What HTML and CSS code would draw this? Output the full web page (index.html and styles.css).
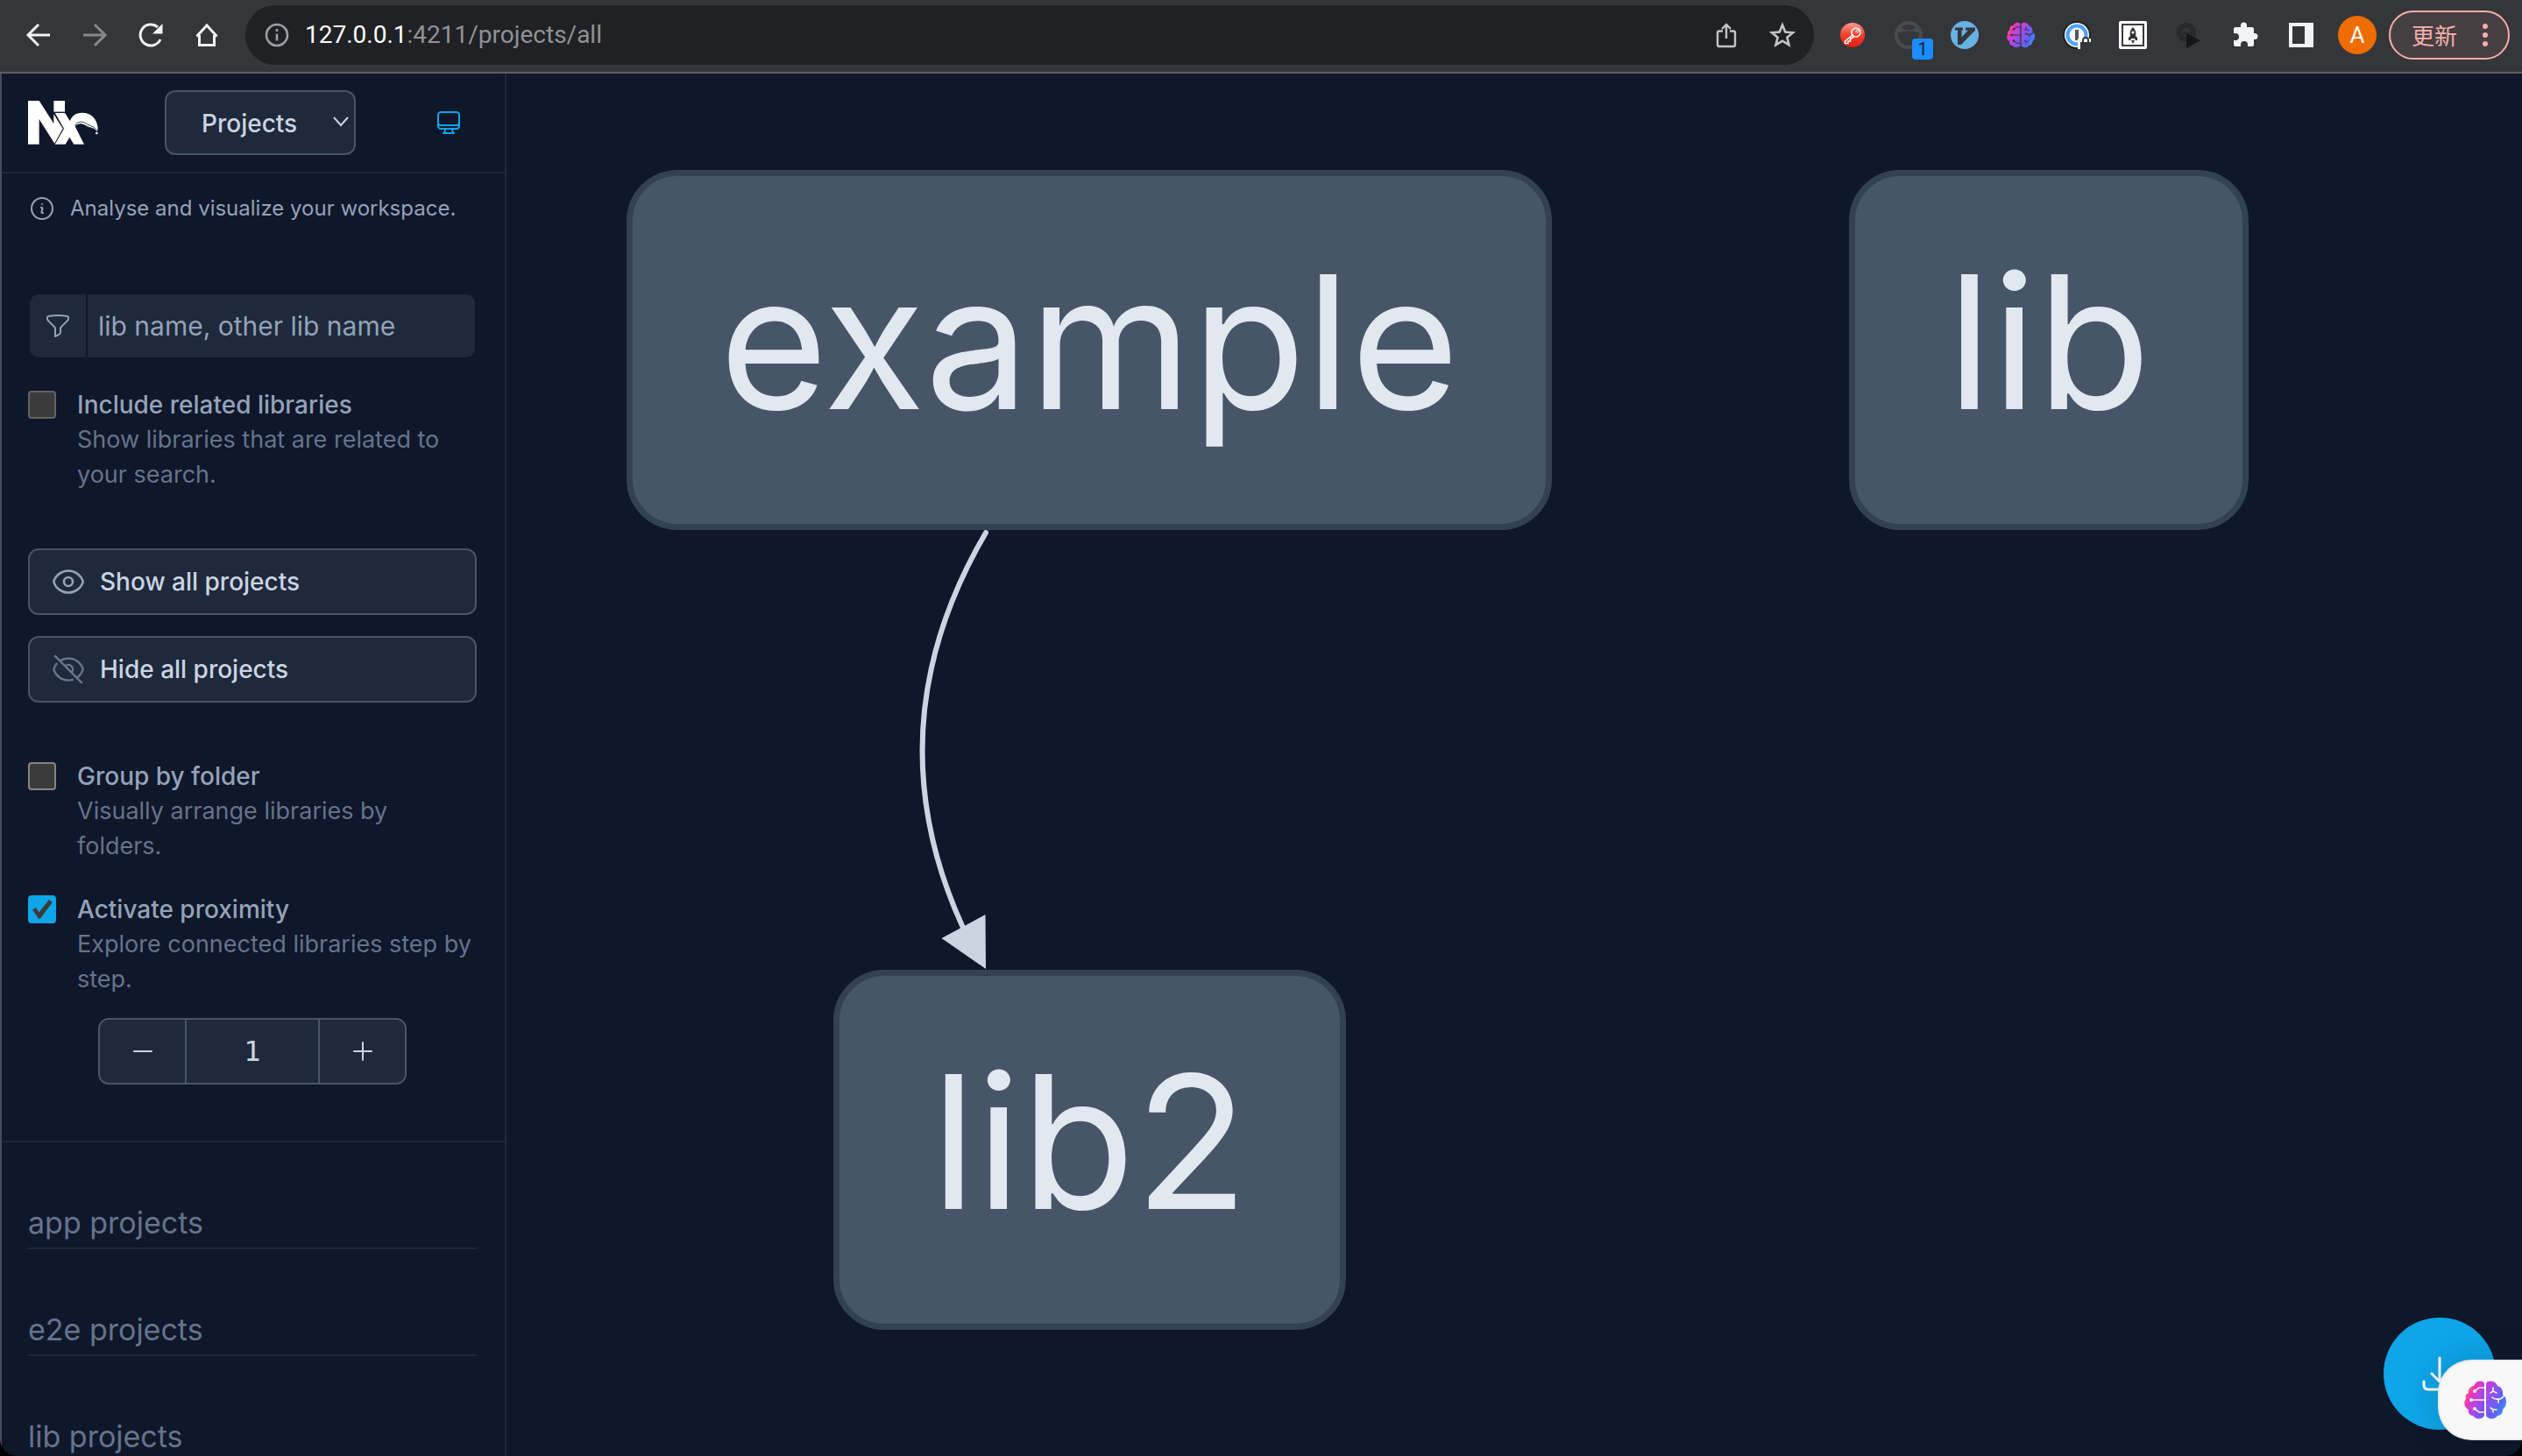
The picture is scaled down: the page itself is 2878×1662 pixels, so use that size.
FILE: index.html
```html
<!DOCTYPE html>
<html lang="en">
<head>
<meta charset="utf-8">
<title>Nx project graph</title>
<link rel="stylesheet" href="styles.css">
</head>
<body>
<svg class="defs" aria-hidden="true">
  <defs>
    <linearGradient id="brain-left" x1="0" y1="0" x2="1" y2="1">
      <stop offset="0" stop-color="#f7a52b"/><stop offset=".16" stop-color="#f58a3c"/><stop offset=".32" stop-color="#ee35b8"/><stop offset=".6" stop-color="#b445e6"/><stop offset="1" stop-color="#5b5bf5"/>
    </linearGradient>
    <linearGradient id="brain-right" x1="0" y1="0" x2="1" y2="1">
      <stop offset="0" stop-color="#d83bd6"/><stop offset=".35" stop-color="#8f52ee"/><stop offset=".65" stop-color="#5566f7"/><stop offset="1" stop-color="#35b6ff"/>
    </linearGradient>
    <linearGradient id="key-red" x1="0" y1="0" x2="0" y2="1">
      <stop offset="0" stop-color="#ff9a8c"/><stop offset=".5" stop-color="#f4422f"/><stop offset="1" stop-color="#e01c10"/>
    </linearGradient>
    <symbol id="brain" viewBox="0 0 48 44">
      <path fill="url(#brain-left)" d="M23 3v37c-2 4-10 5-13 0-4 0-6-4-5-7-5-2-6-9-3-12-1-4 0-6 3-7-1-4 2-8 6-8 2-6 10-7 12-3z"/>
      <path fill="url(#brain-right)" d="M25 3v37c2 4 10 5 13 0 4 0 6-3 6-7 4-3 5-9 3-14l-3-3c1-5-2-9-6-10-2-6-10-7-13-3z"/>
      <g fill="none" stroke="currentColor" stroke-width="1.6" stroke-linecap="round">
        <path d="M23 8h-6l-5 4M23 22H8M23 36h-6l-5-4M30 14l3-2v-4m0 4 4 2M32 19c3 3 10 3 13-1M39 21v4M30 31l3 2h4m-4 0v3"/>
      </g>
      <g fill="currentColor"><circle cx="12" cy="12" r="2"/><circle cx="8" cy="22" r="2"/><circle cx="12" cy="32" r="2"/></g>
    </symbol>
  </defs>
</svg>

<div class="window">
<header class="toolbar">
  <nav class="nav-buttons" aria-label="Navigation">
    <button class="icon-button" aria-label="Back"><svg class="i32" viewBox="0 0 32 32" fill="none" stroke="#f1f3f4" stroke-width="3"><path d="M29 16H5M16 4 4 16l12 12"/></svg></button>
    <button class="icon-button" aria-label="Forward"><svg class="i32" viewBox="0 0 32 32" fill="none" stroke="#87888b" stroke-width="3"><path d="M3 16h24M16 4l12 12-12 12"/></svg></button>
    <button class="icon-button" aria-label="Reload"><svg class="i32" viewBox="0 0 32 32" fill="none" stroke="#f1f3f4" stroke-width="3"><path d="M27 21A12 12 0 1 1 24 7"/><path d="M29.5 3v11.5H18z" fill="#f1f3f4" stroke="none"/></svg></button>
    <button class="icon-button" aria-label="Home"><svg class="i32" viewBox="0 0 32 32" fill="none" stroke="#f1f3f4" stroke-width="3"><path d="M7.5 16v11.5h17V16M4.500 17.500 16 5l11.500 12.500"/></svg></button>
  </nav>
  <div class="address">
    <svg class="i32" viewBox="0 0 32 32" fill="none" stroke="#9aa0a6" stroke-width="2.6"><circle cx="16" cy="16" r="12"/><path d="M16 14.5v8M16 9v3"/></svg>
    <div class="url"><span class="host">127.0.0.1</span>:4211/projects/all</div>
    <button class="icon-button" aria-label="Share"><svg class="i32" viewBox="0 0 32 32" fill="none" stroke="#c4c5c7" stroke-width="2.4"><path d="M12 11.500H8A2 2 0 0 0 6 13.500V27a2 2 0 0 0 2 2h16a2 2 0 0 0 2-2V13.500a2 2 0 0 0-2-2h-4M16 20V4M11 9l5-5 5 5"/></svg></button>
    <button class="icon-button" aria-label="Bookmark"><svg class="i32" viewBox="0 0 32 32" fill="none" stroke="#c4c5c7" stroke-width="2.6"><path d="m16 4.500 3.300 8 8.700.7-6.600 5.600 2.100 8.400L16 22.700l-7.500 4.500 2.100-8.400L4 13.200l8.700-.7z"/></svg></button>
  </div>
  <div class="extensions">
    <button class="icon-button" aria-label="Key"><svg class="i32" viewBox="0 0 32 32"><circle cx="16" cy="16" r="14" fill="url(#key-red)"/><path d="m16 16-8.500 7v2.500h3.500v-2.500h2.500v-2.500l4-2.500" fill="none" stroke="#fff" stroke-width="1.5"/><circle cx="20" cy="13" r="5" fill="none" stroke="#fff" stroke-width="1.5"/><circle cx="21.500" cy="11.500" r="1.500" fill="none" stroke="#fff"/></svg></button>
    <button class="icon-button" aria-label="Tampermonkey"><svg class="i32" viewBox="0 0 32 32"><circle cx="16" cy="16" r="14" fill="none" stroke="#4a4b4c" stroke-width="4"/><path d="M4 8h5l3 2h8l3-2h5v5h-4c-2-2-14-2-16 0H4z" fill="#4a4b4c"/></svg><span class="badge">1</span></button>
    <button class="icon-button" aria-label="Vimium"><svg class="i32" viewBox="0 0 32 32"><circle cx="16" cy="16" r="16" fill="#68b1e5"/><path d="M5 7.500h9v3h-1.500v8L20 10.500h-3v-3h11v3L12 27H8V10.500H5z" fill="#35363a"/></svg></button>
    <button class="icon-button dark-brain" aria-label="Brain"><svg class="i32"><use href="#brain"/></svg></button>
    <button class="icon-button" aria-label="Password manager"><svg class="i32" viewBox="0 0 32 32"><circle cx="16" cy="16" r="16" fill="#202124"/><circle cx="16" cy="16" r="14" fill="#f5f6f7"/><circle cx="16" cy="16" r="10.500" fill="none" stroke="#4aa3ff" stroke-width="4"/><path d="M14 10h4v12h-4z" fill="#55565a"/><path d="M17 20h15v12H17z" fill="#f5f6f7"/><path d="M20 24h12v8H20z" fill="#35363a"/><path d="M23 25v-3a3 3 0 0 1 6 0v3" fill="none" stroke="#35363a" stroke-width="2"/></svg></button>
    <button class="icon-button" aria-label="Rocket"><svg class="i32" viewBox="0 0 32 32"><rect width="32" height="32" rx="2" fill="#fff"/><rect x="4" y="4" width="24" height="24" fill="none" stroke="#3b3b3b" stroke-width="2"/><path d="M16 7c3 3 4 6 3 10l2 2v3h-2l-1-2h-4l-1 2h-2v-3l2-2c-1-4 0-7 3-10zM14 22h4l-2 4z" fill="#333"/><circle cx="16" cy="13" r="1.500" fill="#fff"/></svg></button>
    <button class="icon-button" aria-label="Player"><svg class="i32" viewBox="0 0 32 32"><circle cx="13" cy="13" r="8" fill="none" stroke="#28292c" stroke-width="6"/><path d="M9 14h9" stroke="#28292c" stroke-width="3"/><path d="M13 14v17l16-8.500z" fill="#151618"/></svg></button>
    <button class="icon-button" aria-label="Extensions"><svg class="i32" viewBox="0 0 32 32"><path fill="#f1f3f4" d="M3 9a2 2 0 0 1 2-2h6V5a3.500 3.500 0 0 1 7 0v2h6a2 2 0 0 1 2 2v5h1a3.500 3.500 0 0 1 0 7h-1v6a2 2 0 0 1-2 2h-5v-2a4 4 0 0 0-8 0v2H5a2 2 0 0 1-2-2v-5h2a4 4 0 0 0 0-8H3z"/></svg></button>
    <button class="icon-button" aria-label="Side panel"><svg class="i32" viewBox="0 0 32 32"><path fill="#f1f3f4" fill-rule="evenodd" d="M2 2h28v28H2zM6 6v20h14V6z"/></svg></button>
    <button class="avatar" aria-label="Profile">A</button>
    <button class="update"><span>更新</span><svg viewBox="0 0 6 28" fill="#f6aea9"><circle cx="3" cy="4" r="3"/><circle cx="3" cy="14" r="3"/><circle cx="3" cy="24" r="3"/></svg></button>
  </div>
</header>

<div class="app">
  <aside class="sidebar">
    <div class="brand-row">
      <svg class="logo" viewBox="36 45 240 150" aria-label="Nx">
        <path fill="#fff" d="M36 45h38l50 78V45h38v38h-38v8l30 49-27 52-53-84v86H36z"/>
        <path fill="#fff" d="M128 86h34l17 28c7-16 18-28 42-28 32 0 52 22 54 52l-2 12c-12-14-24-10-34-16-18-12-32-12-42-1l31 61h-35l-15-24-14 24h-37l28-54z"/>
        <path fill="none" stroke="#0f172a" stroke-width="3" d="M124 85h38M127 88l31 52-31 54"/>
        <path fill="none" stroke="#0f172a" stroke-width="2.5" d="M197 130c6-14 24-16 36-8 12 9 22 7 38 22M200 132c10-10 22-8 34-1 12 6 18 6 30 12"/>
        <circle cx="271" cy="156" r="4" fill="#fff"/>
      </svg>
      <div class="select-wrap">
        <select class="select" aria-label="View"><option>Projects</option></select>
        <svg class="chevron" viewBox="0 0 20 12" fill="none" stroke="#cbd5e1" stroke-width="2"><path d="m2 1 8 9 8-9"/></svg>
      </div>
      <button class="icon-button theme" aria-label="Theme"><svg class="i32 line" viewBox="0 0 24 24"><path d="M9 17.250v1.007a3 3 0 01-.879 2.122L7.500 21h9l-.621-.621A3 3 0 0115 18.257V17.250m6-12V15a2.250 2.250 0 01-2.250 2.250H5.250A2.250 2.250 0 013 15V5.250m18 0A2.250 2.250 0 0018.750 3H5.250A2.250 2.250 0 003 5.250m18 0V12a2.250 2.250 0 01-2.250 2.250H5.250A2.250 2.250 0 013 12V5.250"/></svg></button>
    </div>

    <p class="hint"><svg class="i32 line" viewBox="0 0 24 24"><path d="M11.250 11.250l.041-.02a.75.75 0 011.063.852l-.708 2.836a.75.75 0 001.063.853l.041-.021M21 12a9 9 0 11-18 0 9 9 0 0118 0zm-9-3.750h.008v.008H12V8.250z"/></svg>Analyse and visualize your workspace.</p>

    <div class="controls">
      <label class="search">
        <span class="search-icon"><svg class="i32 line" viewBox="0 0 24 24"><path d="M12 3c2.755 0 5.455.232 8.083.678.533.09.917.556.917 1.096v1.044a2.250 2.250 0 01-.659 1.591l-5.432 5.432a2.250 2.250 0 00-.659 1.591v2.927a2.250 2.250 0 01-1.244 2.013L9.750 21v-6.568a2.250 2.250 0 00-.659-1.591L3.659 7.409A2.250 2.250 0 013 5.818V4.774c0-.54.384-1.006.917-1.096A48.320 48.320 0 0112 3z"/></svg></span>
        <input class="search-input" type="text" placeholder="lib name, other lib name" aria-label="Filter by library name">
      </label>
      <div class="option">
        <input class="check dim" type="checkbox" id="related">
        <div><label for="related">Include related libraries</label><p>Show libraries that are related to your search.</p></div>
      </div>

      <div class="actions">
        <button class="action"><svg class="i40 line" viewBox="0 0 24 24"><path d="M2.036 12.322a1.012 1.012 0 010-.639C3.423 7.510 7.360 4.500 12 4.500c4.638 0 8.573 3.007 9.963 7.178.07.207.07.431 0 .639C20.577 16.490 16.640 19.500 12 19.500c-4.638 0-8.573-3.007-9.963-7.178z"/><path d="M15 12a3 3 0 11-6 0 3 3 0 016 0z"/></svg>Show all projects</button>
        <button class="action muted"><svg class="i40 line" viewBox="0 0 24 24"><path d="M3.980 8.223A10.477 10.477 0 001.934 12C3.226 16.338 7.244 19.500 12 19.500c.993 0 1.953-.138 2.863-.395M6.228 6.228A10.450 10.450 0 0112 4.500c4.756 0 8.773 3.162 10.065 7.498a10.523 10.523 0 01-4.293 5.774M6.228 6.228L3 3m3.228 3.228l3.650 3.650m7.894 7.894L21 21m-3.228-3.228l-3.650-3.650m0 0a3 3 0 10-4.243-4.243m4.242 4.242L9.880 9.880"/></svg>Hide all projects</button>
      </div>

      <div class="option">
        <input class="check" type="checkbox" id="group">
        <div><label for="group">Group by folder</label><p>Visually arrange libraries by folders.</p></div>
      </div>
      <div class="option">
        <input class="check" type="checkbox" id="proximity" checked>
        <div><label for="proximity">Activate proximity</label><p>Explore connected libraries step by step.</p></div>
      </div>
      <div class="stepper">
        <button aria-label="Decrease"><svg class="i32 line" viewBox="0 0 24 24"><path d="M19.500 12h-15"/></svg></button>
        <input type="text" value="1" aria-label="Proximity depth" readonly>
        <button aria-label="Increase"><svg class="i32 line" viewBox="0 0 24 24"><path d="M12 4.500v15m7.500-7.500h-15"/></svg></button>
      </div>
    </div>

    <div class="lists">
      <h2>app projects</h2>
      <h2>e2e projects</h2>
      <h2>lib projects</h2>
    </div>
  </aside>

  <main class="graph">
    <svg class="edge" viewBox="0 0 80 504" aria-hidden="true">
      <path d="M77 4Q-53.500 227 51 455" fill="none" stroke="#cbd5e1" stroke-width="6" stroke-linecap="round"/>
      <path d="M77 502 26.500 467 76.500 440z" fill="#cbd5e1"/>
    </svg>
    <div class="node node-example">example</div>
    <div class="node node-lib">lib</div>
    <div class="node node-lib2">lib2</div>
    <button class="download" aria-label="Download"><svg class="line" viewBox="0 0 24 24"><path d="M3 16.500v2.250A2.250 2.250 0 005.250 21h13.500A2.250 2.250 0 0021 18.750V16.500M16.500 12L12 16.500m0 0L7.500 12m4.500 4.500V3"/></svg></button>
    <button class="assistant" aria-label="Assistant"><svg><use href="#brain"/></svg></button>
  </main>
</div>
</div>
</body>
</html>
```
FILE: styles.css
```css
* { box-sizing: border-box; }
body {
  margin: 0;
  background: #000;
  color: #94a3b8;
  font-family: Inter, "Noto Sans CJK SC", sans-serif;
  font-size: 28px;
  line-height: 40px;
}
p, h2 { margin: 0; }
button, input, select { font: inherit; color: inherit; margin: 0; }
button { padding: 0; border: 0; background: none; }
svg { display: block; flex: none; }
.defs { position: absolute; width: 0; height: 0; }
.i32 { width: 32px; height: 32px; }
.i40 { width: 40px; height: 40px; }
.line {
  fill: none;
  stroke: currentColor;
  stroke-width: 1.5;
  stroke-linecap: round;
  stroke-linejoin: round;
}
.window {
  display: flex;
  flex-direction: column;
  height: 100vh;
  overflow: hidden;
  border-radius: 0 0 20px 20px;
  background: #0f172a;
}

/* Browser toolbar */
.toolbar {
  display: flex;
  align-items: center;
  flex: none;
  height: 84px;
  padding: 0 14px 2px 28px;
  background: #35363a;
  border-bottom: 2px solid #5d5e62;
}
.icon-button { position: relative; display: block; flex: none; }
.nav-buttons { display: flex; gap: 32px; }
.address {
  display: flex;
  align-items: center;
  flex: 1;
  height: 68px;
  margin-left: 28px;
  padding: 0 20px;
  gap: 32px;
  border-radius: 34px;
  background: #202124;
}
.url {
  flex: 1;
  margin-left: -16px;
  font-family: Roboto, sans-serif;
  color: #909296;
}
.host { color: #fff; }
.extensions { display: flex; align-items: center; gap: 32px; margin-left: 28px; }
.dark-brain { color: #35363a; }
.badge {
  position: absolute;
  left: 20px;
  top: 20px;
  width: 24px;
  height: 24px;
  border-radius: 4px;
  background: #1a8cff;
  color: #202124;
  font: 20px/24px Roboto, sans-serif;
}
.avatar {
  width: 44px;
  height: 44px;
  margin: 0 -16px 0 -6px;
  border-radius: 50%;
  background: #ef6c00;
  color: #fff;
  font: 26px/44px Roboto, sans-serif;
}
.update {
  display: flex;
  align-items: center;
  justify-content: space-between;
  width: 138px;
  height: 56px;
  margin-left: -2px;
  padding: 0 23px 0 24px;
  border: 2px solid #f6aea9;
  border-radius: 28px;
  background: #453f42;
  color: #f6aea9;
  font: 26px/40px "Noto Sans CJK SC", sans-serif;
}
.update svg { width: 6px; height: 28px; }

/* Sidebar */
.app { display: flex; flex: 1; min-height: 0; }
.sidebar {
  flex: none;
  width: 578px;
  overflow: hidden;
  border-left: 2px solid #454b5a;
  border-right: 2px solid #1e293b;
}
.brand-row {
  display: flex;
  align-items: center;
  gap: 76px;
  height: 114px;
  padding: 0 48px 0 30px;
  border-bottom: 2px solid #1e293b;
}
.logo { width: 80px; height: 50px; }
.select-wrap { position: relative; }
.select {
  appearance: none;
  display: block;
  width: 218px;
  height: 74px;
  padding: 2px 40px 0;
  border: 2px solid #475569;
  border-radius: 12px;
  background: #1e293b;
  color: #cbd5e1;
  font-weight: 500;
}
.chevron {
  position: absolute;
  right: 7px;
  top: 30px;
  width: 20px;
  height: 12px;
}
.theme { margin-left: auto; color: #0ea5e9; }
.hint {
  display: flex;
  align-items: center;
  gap: 16px;
  padding: 20px 30px 0;
  font-size: 24px;
}
.controls {
  display: flex;
  flex-direction: column;
  gap: 32px;
  padding: 78px 30px 64px;
  border-bottom: 2px solid #1e293b;
}
.controls, .lists { padding-right: 32px; }
.search {
  display: flex;
  gap: 2px;
  height: 72px;
  margin: 0 2px 2px;
}
.search-icon {
  display: flex;
  align-items: center;
  justify-content: center;
  width: 64px;
  border-radius: 10px 0 0 10px;
  background: #1e293b;
}
.search-input {
  flex: 1;
  min-width: 0;
  padding: 0 12px;
  border: 0;
  border-radius: 0 10px 10px 0;
  background: #1e293b;
  font-size: 30px;
}
.search-input::placeholder { color: #94a3b8; opacity: 1; }
.option { display: flex; gap: 24px; color: #64748b; }
.option > div { flex: 1; }
.option label { display: block; color: #94a3b8; font-weight: 500; }
.option p { font-size: 27px; }
.check {
  appearance: none;
  flex: none;
  width: 32px;
  height: 32px;
  margin-top: 4px;
  border: 2px solid #858585;
  border-radius: 4px;
  background: #3b3b3b;
}
.check.dim { border-color: #626262; }
.check:checked { border-color: #0ea5e9; background: #0ea5e9; }
.check:checked::before {
  content: "";
  display: block;
  width: 28px;
  height: 28px;
  background: #3b3b3b;
  clip-path: polygon(11% 52%, 24% 43%, 38% 62%, 78% 11%, 92% 21%, 42% 88%, 36% 88%);
}
.actions { display: flex; flex-direction: column; gap: 24px; margin: 32px 0; }
.action {
  display: flex;
  align-items: center;
  gap: 16px;
  height: 76px;
  padding: 0 24px;
  border: 2px solid #475569;
  border-radius: 12px;
  background: #1e293b;
  color: #cbd5e1;
  font-weight: 500;
}
.action svg { color: #94a3b8; }
.action.muted svg { color: #64748b; }
.stepper {
  display: flex;
  width: 352px;
  height: 76px;
  margin: -8px auto 0;
  border: 2px solid #475569;
  border-radius: 12px;
  overflow: hidden;
  background: #1e293b;
  color: #cbd5e1;
}
.stepper button {
  display: flex;
  align-items: center;
  justify-content: center;
  width: 97px;
}
.stepper input {
  flex: 1;
  min-width: 0;
  padding: 0;
  border: solid #475569;
  border-width: 0 2px;
  background: none;
  text-align: center;
  font-family: "DejaVu Sans Mono", monospace;
  font-size: 32px;
}
.lists { padding-top: 64px; padding-left: 30px; }
.lists h2 {
  padding: 4px 0;
  margin-bottom: 64px;
  border-bottom: 2px solid #1e293b;
  color: #64748b;
  font-size: 34px;
  font-weight: 400;
  line-height: 48px;
}

/* Project graph */
.graph { position: relative; flex: 1; overflow: hidden; }
.edge {
  position: absolute;
  left: 470px;
  top: 520px;
  width: 80px;
  height: 504px;
  overflow: visible;
}
.node {
  position: absolute;
  height: 411px;
  border: 7px solid #334155;
  border-radius: 58px;
  background: #475569;
  color: #e2e8f0;
  font-size: 212px;
  line-height: 378px;
  text-align: center;
}
.node-example { left: 137px; top: 110px; width: 1056px; }
.node-lib { left: 1532px; top: 110px; width: 456px; }
.node-lib2 { left: 373px; top: 1023px; width: 585px; }
.download {
  position: absolute;
  right: 30px;
  bottom: 30px;
  display: flex;
  align-items: center;
  justify-content: center;
  width: 128px;
  height: 128px;
  border-radius: 50%;
  background: #0ea5e9;
  color: #fff;
}
.download svg { width: 48px; height: 48px; }
.assistant {
  position: absolute;
  right: 0;
  bottom: 18px;
  width: 96px;
  height: 92px;
  padding-left: 28px;
  border: 2px solid #e9eaec;
  border-right: 0;
  border-radius: 38px 0 0 38px;
  background: #f8f8f9;
  box-shadow: 0 0 40px rgba(15, 23, 42, 0.2);
  color: #f8f8f9;
}
.assistant svg { width: 48px; height: 44px; }
```
